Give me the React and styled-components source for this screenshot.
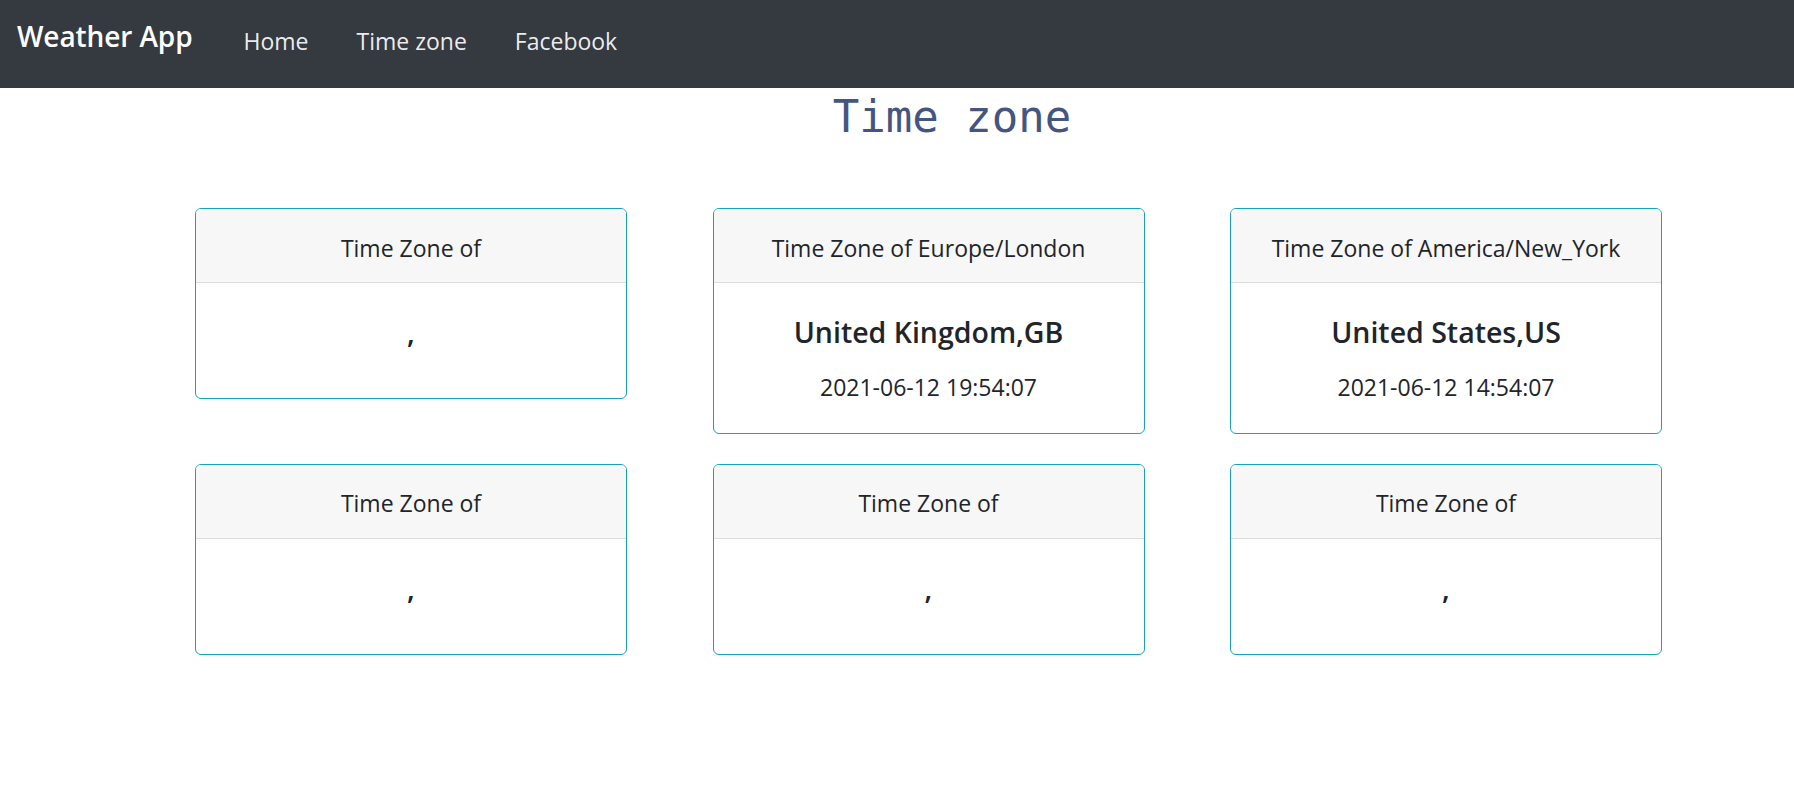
import React from "react";
import styled, { createGlobalStyle } from "styled-components";

const GlobalStyle = createGlobalStyle`
  * { box-sizing: border-box; }
  html, body { margin: 0; padding: 0; background: #fff; }
  body {
    font-family: "Open Sans", "Noto Sans", sans-serif;
    color: #212529;
  }
`;

const NavBar = styled.nav`
  height: 88px;
  background: #343a40;
  display: flex;
  align-items: flex-start;
  padding: 15px 0 0 17px;
`;

const Brand = styled.a`
  font-size: 28px;
  font-weight: 600;
  line-height: 42px;
  color: #fff;
  text-decoration: none;
  margin-right: 27px;
  letter-spacing: -0.1px;
`;

const NavList = styled.ul`
  list-style: none;
  margin: 9px 0 0;
  padding: 0;
  display: flex;
`;

const NavLink = styled.a`
  display: block;
  font-size: 23px;
  line-height: 34.5px;
  color: rgba(255, 255, 255, 0.92);
  text-decoration: none;
  padding: 0 24px;
`;

const PageTitle = styled.h2`
  margin: 4px 0 0;
  padding-left: 110px;
  text-align: center;
  font-family: "DejaVu Sans Mono", "Liberation Mono", monospace;
  font-weight: 400;
  font-size: 44px;
  line-height: 50px;
  color: #445580;
`;

const CardGrid = styled.div`
  display: grid;
  grid-template-columns: repeat(3, 432px);
  column-gap: 85.5px;
  row-gap: 30px;
  align-items: start;
  padding-left: 195px;
  margin-top: 66px;
`;

const Card = styled.div`
  border: 1px solid #17a2b8;
  border-radius: 6px;
  overflow: hidden;
  text-align: center;
  background: #fff;
`;

const CardHeader = styled.div`
  background: #f7f7f7;
  border-bottom: 1px solid #dcdcdc;
  padding: 21.5px 12px 17px;
  font-size: 23px;
  line-height: 34.5px;
  color: #212529;
`;

const CardBody = styled.div`
  padding: 32px 16px 28px;
`;

const Country = styled.h5`
  margin: 0 0 20px;
  font-size: 28.5px;
  font-weight: 600;
  line-height: 35px;
  color: #212529;
`;

const LocalTime = styled.p`
  margin: 0;
  font-size: 23px;
  line-height: 34.5px;
  color: #212529;
`;

const zones = [
  { zone: "", country: "", code: "", time: "" },
  { zone: "Europe/London", country: "United Kingdom", code: "GB", time: "2021-06-12 19:54:07" },
  { zone: "America/New_York", country: "United States", code: "US", time: "2021-06-12 14:54:07" },
  { zone: "", country: "", code: "", time: "" },
  { zone: "", country: "", code: "", time: "" },
  { zone: "", country: "", code: "", time: "" },
];

export default function App() {
  return (
    <>
      <GlobalStyle />
      <NavBar>
        <Brand href="#">Weather App</Brand>
        <NavList>
          <li><NavLink href="#">Home</NavLink></li>
          <li><NavLink href="#">Time zone</NavLink></li>
          <li><NavLink href="#">Facebook</NavLink></li>
        </NavList>
      </NavBar>
      <PageTitle>Time zone</PageTitle>
      <CardGrid>
        {zones.map((z, i) => (
          <Card key={i}>
            <CardHeader>Time Zone of {z.zone}</CardHeader>
            <CardBody>
              <Country>{z.country},{z.code}</Country>
              {z.time && <LocalTime>{z.time}</LocalTime>}
            </CardBody>
          </Card>
        ))}
      </CardGrid>
    </>
  );
}
